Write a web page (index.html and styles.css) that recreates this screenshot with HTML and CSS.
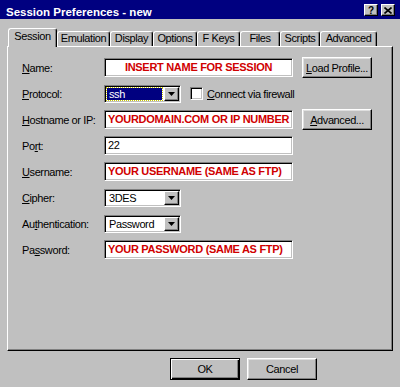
FILE: index.html
```html
<!DOCTYPE html>
<html lang="en">

<head>
    <meta charset="UTF-8">
    <title>Session Preferences - new</title>
    <link rel="stylesheet" href="styles.css">
</head>

<body>
    <div class="window">
        <div class="titlebar">
            <span class="title">Session Preferences - new</span>
            <span class="caption_btns">
                <span class="cbtn">?</span>
                <span class="cbtn">
                    <svg width="8" height="7" viewBox="0 0 8 7"><path d="M0.5 0.5 L7.5 6.5 M7.5 0.5 L0.5 6.5" stroke="#000" stroke-width="1.6" fill="none"/></svg>
                </span>
            </span>
        </div>

        <div class="tabs">
            <div class="tab active" style="width:49px">Session</div>
            <div class="tab" style="width:53px">Emulation</div>
            <div class="tab" style="width:43px">Display</div>
            <div class="tab" style="width:44px">Options</div>
            <div class="tab" style="width:43px">F Keys</div>
            <div class="tab" style="width:40px">Files</div>
            <div class="tab" style="width:40px">Scripts</div>
            <div class="tab" style="width:57px">Advanced</div>
        </div>

        <div class="panel">
            <div class="form">
                <label class="lbl"><u>N</u>ame:</label>
                <div class="field hint center">INSERT NAME FOR SESSION</div>
                <button class="btn side"><u>L</u>oad Profile...</button>

                <label class="lbl"><u>P</u>rotocol:</label>
                <div class="inline">
                    <div class="select focused">
                        <span class="value">ssh</span>
                        <span class="arrow"><svg width="7" height="4" viewBox="0 0 7 4"><path d="M0 0 H7 L3.5 4 Z" fill="#000"/></svg></span>
                    </div>
                    <span class="check"></span>
                    <span class="check_lbl"><u>C</u>onnect via firewall</span>
                </div>

                <label class="lbl"><u>H</u>ostname or IP:</label>
                <div class="field hint">YOURDOMAIN.COM OR IP NUMBER</div>
                <button class="btn side"><u>A</u>dvanced...</button>

                <label class="lbl">Po<u>r</u>t:</label>
                <div class="field">22</div>
                <div></div>

                <label class="lbl"><u>U</u>sername:</label>
                <div class="field hint">YOUR USERNAME (SAME AS FTP)</div>
                <div></div>

                <label class="lbl"><u>C</u>ipher:</label>
                <div class="select">
                    <span class="value">3DES</span>
                    <span class="arrow"><svg width="7" height="4" viewBox="0 0 7 4"><path d="M0 0 H7 L3.5 4 Z" fill="#000"/></svg></span>
                </div>
                <div></div>

                <label class="lbl">Au<u>t</u>hentication:</label>
                <div class="select">
                    <span class="value">Password</span>
                    <span class="arrow"><svg width="7" height="4" viewBox="0 0 7 4"><path d="M0 0 H7 L3.5 4 Z" fill="#000"/></svg></span>
                </div>
                <div></div>

                <label class="lbl">Pa<u>s</u>sword:</label>
                <div class="field hint">YOUR PASSWORD (SAME AS FTP)</div>
                <div></div>
            </div>
        </div>

        <div class="actions">
            <button class="btn default">OK</button>
            <button class="btn">Cancel</button>
        </div>
    </div>
</body>

</html>
```

FILE: styles.css
```css
* {
    margin: 0;
    padding: 0;
    box-sizing: border-box;
}

body {
    background: #c0c0c0;
    color: #000;
    font-family: "Liberation Sans", Arial, sans-serif;
    font-size: 11px;
    letter-spacing: -0.4px;
}

.window {
    width: 400px;
    height: 387px;
}

/* title bar */
.titlebar {
    height: 19px;
    background: #000080;
    color: #fff;
    display: flex;
    align-items: flex-start;
    justify-content: space-between;
    padding: 4px 5px 0 6px;
}

.title {
    font: bold 11.5px "Liberation Sans", Arial, sans-serif;
    letter-spacing: 0;
    line-height: 13px;
    margin-top: 2px;
}

.caption_btns {
    display: flex;
    gap: 3px;
}

.cbtn {
    width: 14px;
    height: 12px;
    background: #c0c0c0;
    color: #000;
    border: 1px solid;
    border-color: #fff #000 #000 #fff;
    box-shadow: inset -1px -1px #808080;
    display: flex;
    align-items: center;
    justify-content: center;
    font: bold 10px "Liberation Sans", Arial, sans-serif;
    letter-spacing: 0;
}

/* tabs */
.tabs {
    display: flex;
    align-items: flex-end;
    height: 18px;
    margin: 9px 0 0 8px;
}

.tab {
    height: 15px;
    border: 1px solid;
    border-color: #fff #000 transparent #fff;
    border-bottom: none;
    border-radius: 3px 3px 0 0;
    box-shadow: inset -1px 0 #808080;
    text-align: center;
    line-height: 13px;
    white-space: nowrap;
}

.tab.active {
    height: 19px;
    margin-bottom: -1px;
    position: relative;
    z-index: 1;
    background: #c0c0c0;
    padding-top: 1px;
}

.panel {
    margin-left: 7px;
    width: 386px;
    height: 305px;
    border: 1px solid;
    border-color: #fff #000 #000 #fff;
    box-shadow: inset -1px -1px #808080;
    padding: 11px 0 0 14px;
}

/* form rows */
.form {
    display: grid;
    grid-template-columns: 73px 189px 70px;
    grid-auto-rows: 19px;
    column-gap: 9px;
    row-gap: 7px;
    align-items: center;
}

.lbl {
    white-space: nowrap;
}

.field {
    height: 19px;
    background: #fff;
    border: 1px solid;
    border-color: #808080 #fff #fff #808080;
    box-shadow: inset 1px 1px #000, inset -1px -1px #c0c0c0;
    padding-left: 3px;
    line-height: 17px;
    white-space: nowrap;
    overflow: hidden;
}

.hint {
    color: #d00000;
    font: bold 11px "Liberation Sans", Arial, sans-serif;
    line-height: 17px;
    letter-spacing: -0.3px;
}

.center {
    text-align: center;
    padding-left: 0;
}

.inline {
    grid-column: 2 / 4;
    display: flex;
    align-items: center;
}

.select {
    width: 77px;
    height: 18px;
    background: #fff;
    border: 1px solid;
    border-color: #808080 #fff #fff #808080;
    box-shadow: inset 1px 1px #000, inset -1px -1px #c0c0c0;
    padding: 2px 1px 2px 2px;
    display: flex;
}

.select .value {
    flex: 1;
    padding-left: 2px;
    line-height: 13px;
    margin-right: 2px;
}

.select.focused .value {
    background: #000080;
    color: #fff;
    outline: 1px dotted #c8c800;
}

.select .arrow {
    width: 15px;
    height: 14px;
    margin-top: -1px;
    background: #c0c0c0;
    border: 1px solid;
    border-color: #fff #000 #000 #fff;
    box-shadow: inset -1px -1px #808080;
    display: flex;
    align-items: center;
    justify-content: center;
}

.check {
    width: 13px;
    height: 13px;
    margin-left: 9px;
    background: #fff;
    border: 1px solid;
    border-color: #808080 #fff #fff #808080;
    box-shadow: inset 1px 1px #000, inset -1px -1px #c0c0c0;
}

.check_lbl {
    margin-left: 4px;
    white-space: nowrap;
}

/* push buttons */
.btn {
    font: inherit;
    letter-spacing: inherit;
    color: #000;
    background: #c0c0c0;
    border: 1px solid;
    border-color: #fff #000 #000 #fff;
    box-shadow: inset -1px -1px #808080, inset 1px 1px #dfdfdf;
    white-space: nowrap;
}

.btn.side {
    height: 21px;
}

.actions {
    display: flex;
    gap: 7px;
    margin: 7px 0 0 170px;
}

.actions .btn {
    width: 70px;
    height: 22px;
}

.btn.default {
    border-color: #000;
    box-shadow: inset 1px 1px #fff, inset -1px -1px #000, inset -2px -2px #808080;
}
```
